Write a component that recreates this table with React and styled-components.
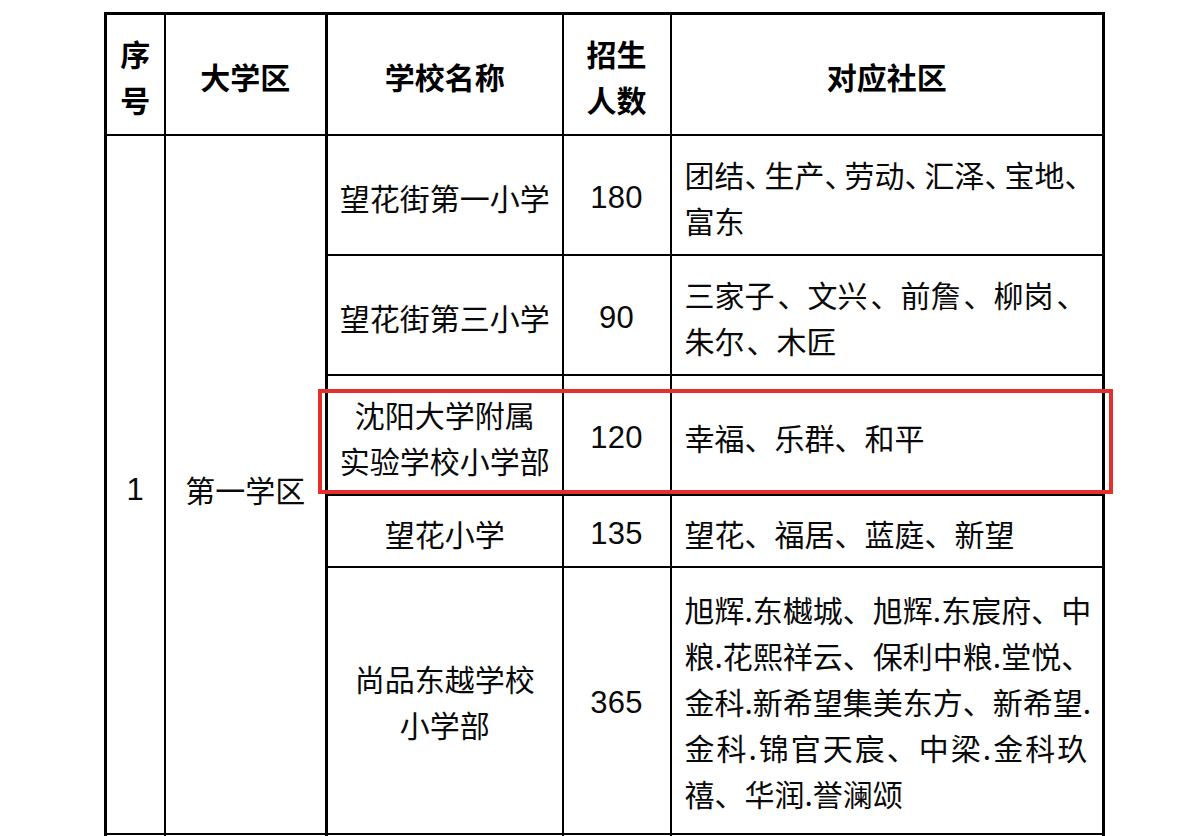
import React from "react";
import styled, { createGlobalStyle } from "styled-components";

const Global = createGlobalStyle`
  html, body { margin: 0; padding: 0; background: #ffffff; overflow: hidden; }
  body { font-family: "Noto Sans CJK SC", "Noto Sans", sans-serif; color: #000; }
`;

const Page = styled.div`
  position: relative;
  width: 1196px;
  height: 836px;
  overflow: hidden;
  padding: 12px 0 0 104px;
  box-sizing: border-box;
`;

const Table = styled.table`
  border-collapse: collapse;
  table-layout: fixed;
  width: 998px;
  border: 3px solid #000;
`;

const Row = styled.tr`
  height: ${(p) => p.$h}px;
`;

const Cell = styled.td`
  border: 2px solid #000;
  border-left-width: ${(p) => (p.$thickLeft ? 3 : 2)}px;
  padding: 0;
  padding-left: ${(p) => (p.$left ? 13 : 0)}px;
  padding-top: ${(p) => (p.$pt !== undefined ? p.$pt : 4)}px;
  text-align: ${(p) => (p.$left ? "left" : "center")};
  vertical-align: middle;
  font-size: 30px;
  line-height: 46px;
  font-weight: 400;
  white-space: nowrap;
  overflow: hidden;
  color: #0a0a0a;
`;

const Head = styled(Cell).attrs({ as: "th" })`
  font-weight: 700;
  color: #000;
`;

const Num = styled.span`
  font-family: "Liberation Sans", Arial, sans-serif;
  font-size: 31px;
  letter-spacing: 0.3px;
`;

const Line = styled.div`
  letter-spacing: ${(p) => p.$ls || 0}px;
`;

const P = styled.span`
  letter-spacing: ${(p) => p.$ls || 0}px;
  margin-left: ${(p) => p.$ml || 0}px;
`;

const Highlight = styled.div`
  position: absolute;
  left: 318px;
  top: 389px;
  width: 795px;
  height: 105px;
  border: 4px solid #e4302c;
  box-sizing: border-box;
  pointer-events: none;
`;

export default function App() {
  return (
    <>
      <Global />
      <Page>
        <Table>
          <colgroup>
            <col style={{ width: 59 }} />
            <col style={{ width: 162 }} />
            <col style={{ width: 236 }} />
            <col style={{ width: 108 }} />
            <col style={{ width: 433 }} />
          </colgroup>
          <tbody>
            <Row $h={121}>
              <Head>序<br />号</Head>
              <Head>大学区</Head>
              <Head $thickLeft>学校名称</Head>
              <Head>招生<br />人数</Head>
              <Head>对应社区</Head>
            </Row>
            <Row $h={120}>
              <Cell rowSpan={5} $pt={9}><Num>1</Num></Cell>
              <Cell rowSpan={5} $pt={9}>第一学区</Cell>
              <Cell $thickLeft>望花街第一小学</Cell>
              <Cell><Num>180</Num></Cell>
              <Cell $left>
                <Line>
                  团结<P $ls={-10}>、</P>生产<P $ls={-10}>、</P>劳动<P $ls={-10}>、</P>汇泽<P $ls={-10}>、</P>宝地<P $ls={-10}>、</P>
                </Line>
                <Line>富东</Line>
              </Cell>
            </Row>
            <Row $h={120}>
              <Cell $thickLeft>望花街第三小学</Cell>
              <Cell><Num>90</Num></Cell>
              <Cell $left>
                <Line>
                  三家子<P $ml={3}>、</P>文兴<P $ml={3}>、</P>前詹<P $ml={3}>、</P>柳岗<P $ml={3}>、</P>
                </Line>
                <Line>朱尔<P $ml={2}>、</P>木匠</Line>
              </Cell>
            </Row>
            <Row $h={120}>
              <Cell $thickLeft>沈阳大学附属<br />实验学校小学部</Cell>
              <Cell><Num>120</Num></Cell>
              <Cell $left>幸福、乐群、和平</Cell>
            </Row>
            <Row $h={72}>
              <Cell $thickLeft>望花小学</Cell>
              <Cell><Num>135</Num></Cell>
              <Cell $left>望花、福居、蓝庭、新望</Cell>
            </Row>
            <Row $h={267}>
              <Cell $thickLeft $pt={2}>尚品东越学校<br />小学部</Cell>
              <Cell $pt={2}><Num>365</Num></Cell>
              <Cell $left $pt={2}>
                <Line>旭辉.东樾城、旭辉.东宸府、中</Line>
                <Line>粮.花熙祥云、保利中粮.堂悦、</Line>
                <Line>金科.新希望集美东方、新希望.</Line>
                <Line $ls={2}>金科.锦官天宸、中梁.金科玖</Line>
                <Line>禧、华润.誉澜颂</Line>
              </Cell>
            </Row>
            <Row $h={60}>
              <Cell />
              <Cell />
              <Cell $thickLeft />
              <Cell />
              <Cell />
            </Row>
          </tbody>
        </Table>
        <Highlight />
      </Page>
    </>
  );
}
